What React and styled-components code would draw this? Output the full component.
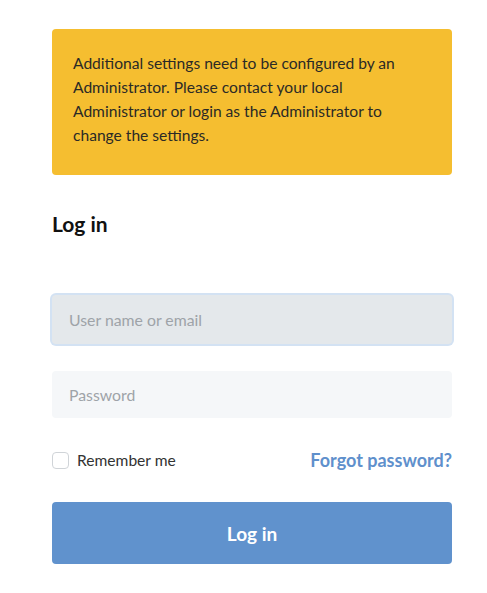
import styled, { createGlobalStyle } from "styled-components";

const GlobalStyle = createGlobalStyle`
  body {
    margin: 0;
    background: #ffffff;
    font-family: "Lato", "Liberation Sans", sans-serif;
  }
`;

const Page = styled.div`
  width: 400px;
  margin-left: 52px;
  padding-top: 29px;
  display: flex;
  flex-direction: column;
`;

const Notice = styled.div`
  background: #f5be30;
  border-radius: 4px;
  padding: 22px 21px 28px;
  font-size: 15.6px;
  line-height: 24px;
  color: #2b2a26;
`;

const Title = styled.h2`
  margin: 37px 0 0;
  font-size: 21px;
  font-weight: 700;
  line-height: 24px;
  color: #111;
`;

const Form = styled.form`
  display: flex;
  flex-direction: column;
  margin-top: 59px;
`;

const Input = styled.input`
  box-sizing: border-box;
  height: ${(p) => (p.$focused ? "49px" : "47px")};
  width: 100%;
  border: none;
  border-radius: 4px;
  padding: 0 17px;
  font-family: inherit;
  font-size: 15.8px;
  color: #333;
  background: ${(p) => (p.$focused ? "#e4e8eb" : "#f5f7f9")};
  box-shadow: ${(p) => (p.$focused ? "0 0 0 2px #d3e2f3" : "none")};
  outline: none;
  margin-bottom: ${(p) => p.$gap || "0"};

  &::placeholder {
    color: #9ea3a8;
  }
`;

const OptionsRow = styled.div`
  display: flex;
  justify-content: space-between;
  align-items: center;
  margin-top: 31px;
`;

const CheckLabel = styled.label`
  display: flex;
  align-items: center;
  gap: 8px;
  font-size: 15.6px;
  color: #333;
`;

const CheckBox = styled.span`
  box-sizing: border-box;
  width: 17px;
  height: 17px;
  border: 1px solid #d0d4d8;
  border-radius: 4px;
  background: #fff;
`;

const ForgotLink = styled.a`
  font-size: 18px;
  font-weight: 700;
  color: #5f90cc;
  text-decoration: none;
`;

const SubmitButton = styled.button`
  margin-top: 31px;
  height: 62px;
  border: none;
  border-radius: 4px;
  background: #6092cd;
  color: #fff;
  font-family: inherit;
  font-size: 19px;
  font-weight: 700;
`;

export default function App() {
  return (
    <>
      <GlobalStyle />
      <Page>
        <Notice>
          Additional settings need to be configured by an Administrator. Please
          contact your local Administrator or login as the Administrator to
          change the settings.
        </Notice>
        <Title>Log in</Title>
        <Form onSubmit={(e) => e.preventDefault()}>
          <Input $focused $gap="27px" placeholder="User name or email" />
          <Input type="password" placeholder="Password" />
          <OptionsRow>
            <CheckLabel>
              <CheckBox />
              Remember me
            </CheckLabel>
            <ForgotLink href="#">Forgot password?</ForgotLink>
          </OptionsRow>
          <SubmitButton type="submit">Log in</SubmitButton>
        </Form>
      </Page>
    </>
  );
}
